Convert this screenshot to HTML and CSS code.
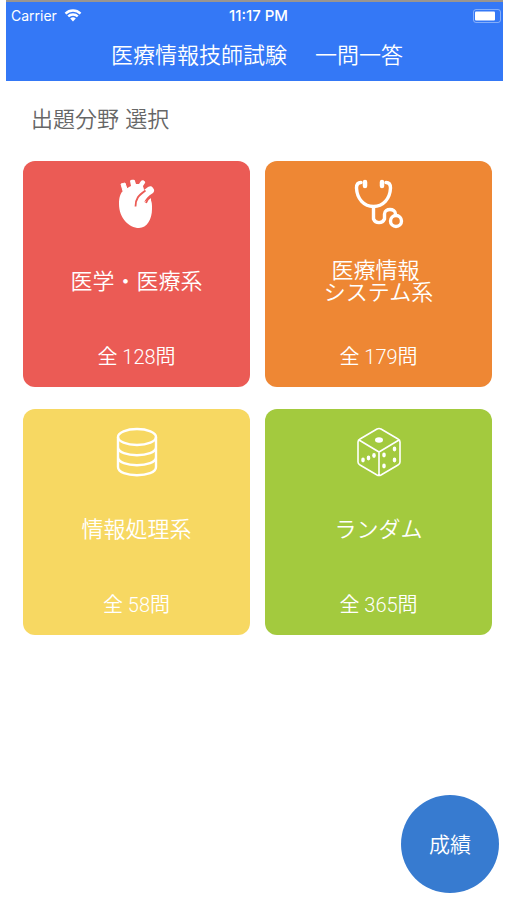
FILE: index.html
```
<!DOCTYPE html>
<html lang="ja">
<head>
    <meta charset="UTF-8">
    <meta name="viewport" content="width=device-width, initial-scale=1">
    <title>医療情報技師試験 一問一答</title>
    <link rel="stylesheet" href="styles.css">
</head>
<body>
<header class="header">
    <div class="status">
        <div class="carrier">
            <span>Carrier</span>
            <svg class="wifi" viewBox="0 0 18 13" aria-hidden="true">
                <path d="M1.5 4.6a10.8 10.8 0 0 1 15 0M4.2 7.4a6.9 6.9 0 0 1 9.6 0" fill="none" stroke="#fff" stroke-width="2.4"/>
                <path d="M6.2 9.6a4 4 0 0 1 5.6 0L9 12.6z" fill="#fff"/>
            </svg>
        </div>
        <span class="time">11:17 PM</span>
        <div class="battery">
            <svg viewBox="0 0 28 14" aria-hidden="true">
                <rect x="0.5" y="0.5" width="27" height="13" rx="2.5" fill="none" stroke="#fff" stroke-opacity="0.4"/>
                <rect x="2" y="2.5" width="20" height="9" rx="1" fill="#fff"/>
            </svg>
        </div>
    </div>
    <h1 class="title">医療情報技師試験　 一問一答</h1>
</header>

<main class="main">
    <h2 class="subtitle">出題分野 選択</h2>
    <div class="cards">
        <button type="button" class="card red">
            <svg class="icon" viewBox="0 0 50 50" aria-hidden="true">
                <path d="M12 11C8 14 7 19 7 25c0 14 10 24 20 24 8 0 13-9 13-19 0-5 0-8-2-10l-1 3-5 1c1-4 4-7 9-10 2-2 1-4 0-5-1-2-3-2-5-1l-4 3c0-2-1-3-1-4l2-3c1-1-2-4-4-2l-2 3h-3l-1-3c0-2-5-1-5 0l1 5c-2 1-4 2-7 4z" fill="#fff"/>
                <path d="M9 5l4-1 2 6-4 2z" fill="#fff" stroke="#fff" stroke-linejoin="round"/>
                <path d="M30 25l4 4 5-1V18l-4 3z" fill="#fff"/>
                <path d="M23.5 27.5c0-8 3-11 10-16M34 24c1-3 3-5 5-6" fill="none" stroke="#eb5b55" stroke-width="1.8"/>
            </svg>
            <span class="name">医学・医療系</span>
            <span class="count">全 128問</span>
        </button>
        <button type="button" class="card orange">
            <svg class="icon" viewBox="0 0 50 50" fill="none" stroke="#fff" stroke-width="3.4" stroke-linecap="round" aria-hidden="true">
                <path d="M7 3.5Q2.5 3.5 2.5 9C3 20 10 27.5 19.5 27.5S36 20 36.5 9Q36.5 3.5 32 3.5"/>
                <path d="M19.5 28v12a6 6 0 0 0 11 0V35c0-6 11-6 11 0"/>
                <circle cx="42" cy="42" r="5.5"/>
                <path d="M11 3v4M28 3v4" stroke-width="4.5"/>
            </svg>
            <span class="name">医療情報&nbsp;<br>システム系</span>
            <span class="count">全 179問</span>
        </button>
        <button type="button" class="card yellow">
            <svg class="icon" viewBox="0 0 50 50" fill="none" stroke="#fff" stroke-width="2.4" aria-hidden="true">
                <ellipse cx="25" cy="10" rx="19" ry="8"/>
                <path d="M6 10v30c0 11 38 11 38 0V10M6 20c0 11 38 11 38 0M6 30c0 11 38 11 38 0"/>
            </svg>
            <span class="name">情報処理系</span>
            <span class="count">全 58問</span>
        </button>
        <button type="button" class="card green">
            <svg class="icon" viewBox="0 0 50 50" fill="#fff" aria-hidden="true">
                <path d="M23 2q2-1 4 0L44 12q2 1 2 3v20q0 2-2 3L27 48q-2 1-4 0L6 38q-2-1-2-3V15q0-2 2-3zM5 13l20 12 20-12M25 25v23" fill="none" stroke="#fff" stroke-width="1.6"/>
                <ellipse cx="25" cy="13" rx="4" ry="2.8"/>
                <ellipse cx="9" cy="33" rx="1.8" ry="2.4"/>
                <ellipse cx="14.5" cy="31" rx="1.8" ry="2.4"/>
                <ellipse cx="20" cy="28.5" rx="1.8" ry="2.4"/>
                <ellipse cx="30" cy="28" rx="1.8" ry="2.4"/>
                <ellipse cx="30" cy="39" rx="1.8" ry="2.4"/>
                <ellipse cx="40.5" cy="22" rx="1.8" ry="2.4"/>
                <ellipse cx="40.5" cy="33" rx="1.8" ry="2.4"/>
            </svg>
            <span class="name">ランダム</span>
            <span class="count">全 365問</span>
        </button>
    </div>
</main>

<button type="button" class="result">成績</button>
</body>
</html>
```
FILE: styles.css
```
* {
    box-sizing: border-box;
}

body {
    margin: 0 4px 0 6px;
    background: #fff;
    font-family: Inter, "Noto Sans CJK JP", sans-serif;
    font-weight: 350;
}

.header {
    border-top: 2px solid #9a958f;
    padding-bottom: 7px;
    background: #3478f6;
    color: #fff;
}

.status {
    display: grid;
    grid-template-columns: 1fr auto 1fr;
    align-items: center;
    height: 27px;
    padding: 0 2px 0 5px;
    font-size: 14px;
    font-weight: 400;
}

.carrier {
    display: flex;
    align-items: center;
    gap: 7px;
}

.wifi {
    width: 18px;
    height: 13px;
}

.time {
    padding-left: 5px;
    font-size: 15px;
    font-weight: 500;
}

.battery {
    display: flex;
    justify-content: flex-end;
}

.battery svg {
    width: 28px;
    height: 14px;
}

.title {
    margin: 8px 0 0;
    padding-left: 5px;
    font-size: 22px;
    line-height: 37px;
    font-weight: 350;
    text-align: center;
    white-space: pre;
}

.main {
    padding: 22px 11px 0 17px;
}

.subtitle {
    margin: 0 8px 26px;
    color: #666;
    font-size: 22px;
    line-height: 32px;
    font-weight: 350;
}

.cards {
    display: grid;
    grid-template-columns: 1fr 1fr;
    gap: 22px 15px;
}

.card {
    display: flex;
    flex-direction: column;
    align-items: center;
    aspect-ratio: 227 / 226;
    padding: 18px 8px 6px;
    border: 0;
    border-radius: 12px;
    color: #fff;
    font: inherit;
    cursor: pointer;
}

.red {
    background: #eb5b55;
}

.orange {
    background: #ee8734;
}

.yellow {
    background: #f7d862;
}

.green {
    background: #a3ca3e;
}

.icon {
    width: 50px;
    height: 50px;
}

.name {
    display: flex;
    flex: 1;
    flex-direction: column;
    justify-content: center;
    font-size: 22px;
    line-height: 22px;
}

.count {
    font-family: Roboto, "Noto Sans CJK JP", sans-serif;
    font-size: 20px;
    line-height: 48px;
}

.result {
    position: fixed;
    right: 8px;
    bottom: 7px;
    width: 98px;
    height: 98px;
    padding: 0 0 2px;
    border: 0;
    border-radius: 50%;
    background: #377bd0;
    color: #fff;
    font: inherit;
    font-size: 21px;
    cursor: pointer;
}
```
